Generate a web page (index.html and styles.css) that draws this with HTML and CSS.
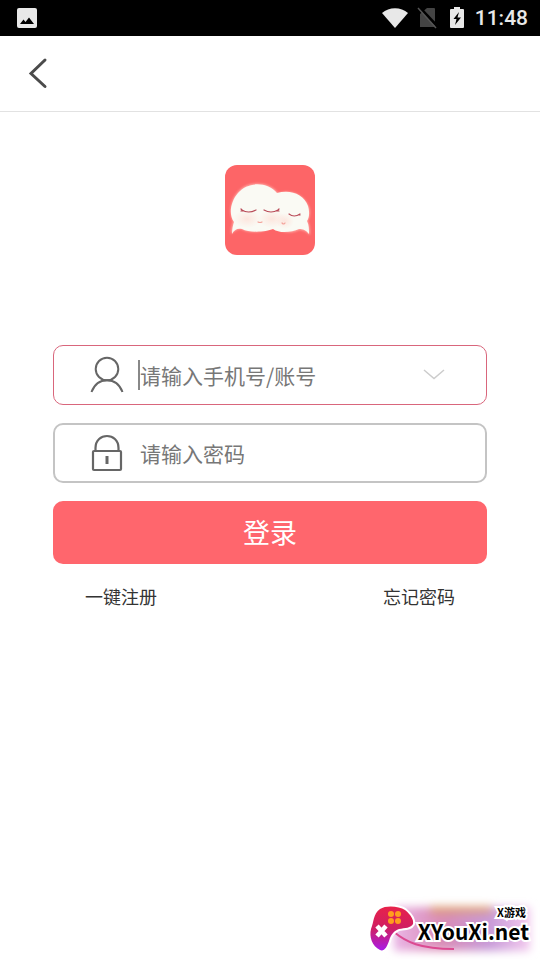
FILE: index.html
```
<!DOCTYPE html>
<html lang="zh-CN">
<head>
<meta charset="utf-8">
<meta name="viewport" content="width=device-width, initial-scale=1">
<title>登录</title>
<link rel="stylesheet" href="styles.css">
</head>
<body>
<div class="status">
  <svg class="status-photo" width="20" height="20" viewBox="0 0 20 20" aria-hidden="true">
    <rect width="20" height="20" rx="2" fill="#e8e8e8"/>
    <path d="M3 16 6.500 11.500 8.500 14 12 9.500 17 16Z" fill="#000"/>
  </svg>
  <div class="status-right">
    <svg width="26" height="21" viewBox="0 0 26 21" aria-hidden="true">
      <path d="M0 5C7-1.300 19-1.300 26 5L13 20Z" fill="#e8e8e8"/>
    </svg>
    <svg width="20" height="20" viewBox="0 0 20 20" aria-hidden="true">
      <path d="M8 0H15Q16 0 16 1V19H1V6Z" fill="#444"/>
      <path d="M1 0 19 19" stroke="#000" stroke-width="3"/>
      <path d="M-1 0 17 20" stroke="#555" stroke-width="1.500"/>
    </svg>
    <svg width="14" height="22" viewBox="0 0 14 22" aria-hidden="true">
      <path d="M4 0H10V2H13Q14 2 14 3V20Q14 21 13 21H1Q0 21 0 20V3Q0 2 1 2H4Z" fill="#e8e8e8"/>
      <path d="M9 5 3.500 12H6.500L5 18 11 10.500H7.500Z" fill="#000"/>
    </svg>
    <time class="clock">11:48</time>
  </div>
</div>
<header class="bar">
  <button class="back" type="button" aria-label="返回">
    <svg width="18" height="32" viewBox="0 0 18 32" aria-hidden="true">
      <path d="M16 2 2 15.500 16 28.500" fill="none" stroke="#4b4b4b" stroke-width="3" stroke-linecap="round"/>
    </svg>
  </button>
</header>
<main class="content">
  <svg class="logo" width="90" height="90" viewBox="0 0 90 90" aria-hidden="true">
    <defs>
      <radialGradient id="blush"><stop offset="0" stop-color="#ffd5cc" stop-opacity=".55"/><stop offset="1" stop-color="#ffd9d0" stop-opacity="0"/></radialGradient>
      <filter id="glow" x="-10%" y="-10%" width="120%" height="120%"><feGaussianBlur stdDeviation="1"/></filter>
    </defs>
    <rect width="90" height="90" rx="12" fill="#fd6567"/>
    <path d="M48 60C43 68 24 69 16 64C12 64 9 66 6 69C6 65 7 60 8 56C4 49 5 36 12 28C22 15 44 16 53 28C66 24 79 29 84 42C86 48 84 53 83 56C85 61 85 66 85 70C81 66 78 65 74 65C66 69 54 68 48 60Z" fill="#ffaaa5" filter="url(#glow)"/>
    <path d="M48 64C41 67 24 68 17 64C12 63 9 65 7 69C7 64 8 60 9 57C3 49 6 36 13 28C23 16 43 17 52 28C65 24 79 29 83 41C85 48 84 53 82 56C84 60 84 64 84 69C81 65 78 64 74 64C67 67 55 69 48 64Z" fill="#fafaf4"/>
    <ellipse cx="22" cy="54" rx="14" ry="9" fill="url(#blush)"/>
    <ellipse cx="47" cy="54" rx="14" ry="9" fill="url(#blush)"/>
    <ellipse cx="60" cy="56" rx="9" ry="8" fill="url(#blush)"/>
    <g fill="none" stroke="#b94b58" stroke-width="1.200" stroke-linecap="round">
      <path d="M17 45Q23 49 31 45M17 45 16 44M18 46 16 46M39 45Q46 49 53 45M53 45 54 44M52 46 54 46"/>
      <path d="M64 49Q69 53 75 49M74 50 75 50"/>
      <path d="M33 57Q35 58 37 57M57 58Q59 60 60 58" stroke="#f4a39b"/>
    </g>
  </svg>
  <form class="form">
    <div class="field field-active">
      <label class="field-icon" for="account" aria-label="账号">
        <svg width="34" height="36" viewBox="0 0 34 36" aria-hidden="true">
          <g fill="none" stroke="#666" stroke-width="2">
            <circle cx="17" cy="12" r="11.300"/>
            <path d="M1.500 35C5 26 10 23.300 17 23.300S29 26 32.500 35"/>
          </g>
        </svg>
      </label>
      <span class="caret"></span>
      <input class="input" id="account" type="text" placeholder="请输入手机号/账号">
      <button class="expand" type="button" aria-label="选择账号">
        <svg width="22" height="12" viewBox="0 0 22 12" aria-hidden="true">
          <path d="M1 1 11 9.500 21 1" fill="none" stroke="#ccc" stroke-width="1.500"/>
        </svg>
      </button>
    </div>
    <div class="field">
      <label class="field-icon" for="password" aria-label="密码">
        <svg width="32" height="38" viewBox="0 0 32 38" aria-hidden="true">
          <g fill="none" stroke="#666" stroke-width="2.200">
            <rect x="2" y="17" width="28" height="19" rx="1"/>
            <path d="M4.500 17V14C4.500-2 27.500-2 27.500 14V17"/>
            <path d="M16 22V30" stroke-width="3"/>
          </g>
        </svg>
      </label>
      <input class="input" id="password" type="password" placeholder="请输入密码">
    </div>
    <button class="submit" type="submit">登录</button>
    <nav class="links">
      <a href="#register">一键注册</a>
      <a href="#forgot">忘记密码</a>
    </nav>
  </form>
</main>
<aside class="mark">
  <svg width="180" height="65" viewBox="0 0 180 65" aria-hidden="true">
    <defs>
      <linearGradient id="pad" x1="0" y1="0" x2="0" y2="1"><stop offset="0" stop-color="#e8224a"/><stop offset=".5" stop-color="#cf1f63"/><stop offset="1" stop-color="#a81be8"/></linearGradient>
      <linearGradient id="haze" x1="0" x2="1"><stop offset="0" stop-color="#e9b4e6"/><stop offset=".35" stop-color="#d98bb5"/><stop offset=".7" stop-color="#c79ad8"/><stop offset="1" stop-color="#f3c9ee"/></linearGradient>
      <filter id="soft" x="-20%" y="-50%" width="140%" height="200%"><feGaussianBlur stdDeviation="4"/></filter>
    </defs>
    <g filter="url(#soft)">
      <rect x="34" y="12" width="136" height="44" fill="url(#haze)"/>
      <rect x="70" y="11" width="62" height="8" fill="#dfa070" opacity=".8"/>
    </g>
    <path d="M34 37C46 47 60 54 94 54" fill="none" stroke="#db4a91" stroke-width="2"/>
    <path d="M20 14C26 10 39 11 45 15C51 20 54 25 53 29C51 33 45 33 39 34C34 36 31 39 29 46C27 52 24 57 20 55C12 51 9 42 11 34C14 27 13 19 20 14Z" fill="url(#pad)" stroke="#fff" stroke-width="4" stroke-linejoin="round" paint-order="stroke"/>
    <g fill="#ff9d1e"><circle cx="31" cy="19" r="3"/><circle cx="38" cy="19" r="3"/><circle cx="31" cy="26" r="3"/><circle cx="38" cy="26" r="3"/></g>
    <path d="M17 31 26 41M26 31 17 41" stroke="#fff" stroke-width="4.500"/>
  </svg>
  <div class="mark-text">
    <span class="mark-small">X游戏</span>
    <span class="mark-name">XYouXi.net</span>
  </div>
</aside>
</body>
</html>
```
FILE: styles.css
```
* {
  box-sizing: border-box;
}

body {
  margin: 0;
  min-height: 100vh;
  position: relative;
  background: #fff;
  color: #333;
  font-family: "Noto Sans CJK SC", sans-serif;
}

svg {
  display: block;
  flex: none;
  overflow: visible;
}

button {
  border: 0;
  padding: 0;
  background: none;
  font: inherit;
  cursor: pointer;
}

.status {
  display: flex;
  justify-content: space-between;
  align-items: center;
  height: 36px;
  padding: 0 12px 0 17px;
  background: #000;
  color: #e8e8e8;
}

.status-right {
  display: flex;
  align-items: center;
  gap: 11px;
}

.clock {
  font: 500 21px/36px Roboto, sans-serif;
}

.bar {
  display: flex;
  align-items: center;
  height: 76px;
  padding: 0 29px;
  border-bottom: 1px solid #e2e2e2;
}

.content {
  display: flex;
  flex-direction: column;
  align-items: center;
  gap: 90px;
  padding: 53px;
}

.form {
  display: flex;
  flex-direction: column;
  gap: 18px;
  width: 100%;
}

.field {
  display: flex;
  align-items: center;
  height: 60px;
  padding: 0 40px 0 36px;
  border: 2px solid #c4c4c4;
  border-radius: 10px;
}

.field-active {
  padding: 0 41px 0 37px;
  border: 1px solid #d9667c;
}

.field-icon {
  display: flex;
  justify-content: center;
  width: 32px;
  margin-right: 17px;
}

.field-active .field-icon {
  margin-right: 15px;
}

.caret {
  width: 2px;
  height: 30px;
  background: #888;
}

.input {
  flex: 1;
  min-width: 0;
  padding: 0 0 1px;
  border: 0;
  outline: 0;
  background: none;
  font: 21px/30px "Noto Sans CJK SC", sans-serif;
  color: #333;
}

.input::placeholder {
  color: #777;
  opacity: 1;
}

.submit {
  height: 63px;
  padding-bottom: 2px;
  border-radius: 10px;
  background: #ff666d;
  color: #fff;
  font-size: 27px;
}

.links {
  display: flex;
  justify-content: space-between;
  padding: 0 32px;
  font-size: 18px;
  line-height: 28px;
}

.links a {
  color: #333;
  text-decoration: none;
}

.mark {
  position: absolute;
  right: 0;
  bottom: 0;
}

.mark-text {
  position: absolute;
  top: 9px;
  right: 11px;
  display: flex;
  flex-direction: column;
  align-items: flex-end;
  color: #000;
  -webkit-text-stroke: 4px #fff;
  paint-order: stroke fill;
}

.mark-small {
  padding-right: 3px;
  font-size: 11px;
  font-weight: 700;
  line-height: 16px;
}

.mark-name {
  font-size: 21px;
  font-weight: 700;
  line-height: 22px;
}
```
